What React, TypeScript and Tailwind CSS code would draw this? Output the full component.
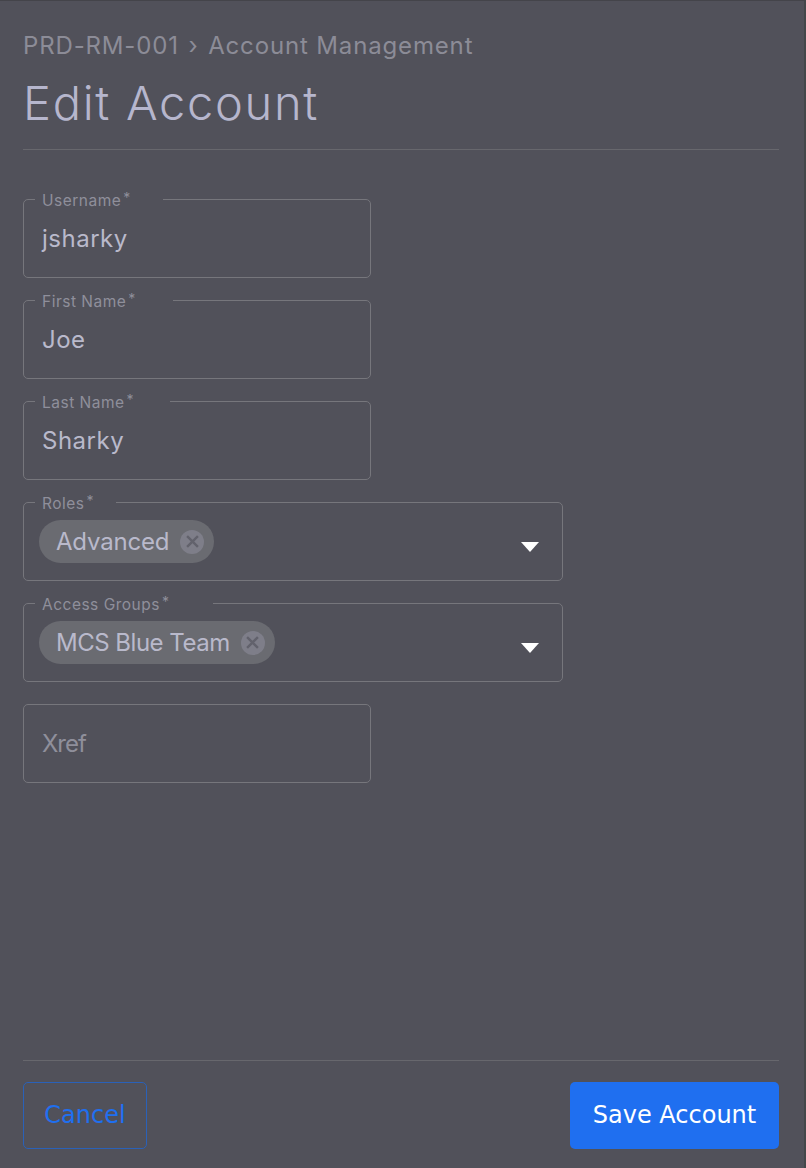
const fontStack = 'font-["Inter","Noto_Sans",sans-serif]'

interface FieldProps {
  label: string
  value: string
  notch: string
}

function Legend({ label, className }: { label: string; className: string }) {
  return (
    <legend className={`${className} pl-[7px] h-[16px] text-[15.5px] leading-[19px] tracking-[0.5px] font-normal text-[#8f8f9b] whitespace-nowrap`}>
      {label}
      <span className="relative -top-[3px] ml-[2px] text-[14px]">*</span>
    </legend>
  )
}

function TextField({ label, value, notch }: FieldProps) {
  return (
    <fieldset className="w-[348px] h-[87px] border border-[#76767c] rounded-[5px] px-[18px]">
      <Legend label={label} className={`-ml-[7px] ${notch}`} />
      <div className="pt-[16px] text-[24px] leading-[32px] tracking-[0.5px] font-normal text-[#b9b9cb]">{value}</div>
    </fieldset>
  )
}

function Chip({ text, tracking }: { text: string; tracking: string }) {
  return (
    <div className="inline-flex items-center h-[43px] rounded-full bg-[#6a6b71] pl-[17px] pr-[10px] gap-[11px]">
      <span className={`text-[24px] leading-[32px] font-normal text-[#b9b9cb] ${tracking}`}>{text}</span>
      <span className="w-[24px] h-[24px] rounded-full bg-[#7e7e89] flex items-center justify-center">
        <svg width="13" height="13" viewBox="0 0 12 12" fill="none" stroke="#62626c" strokeWidth="2.2">
          <path d="M1 1l10 10M11 1L1 11" />
        </svg>
      </span>
    </div>
  )
}

function SelectField({ label, value, notch, tracking }: FieldProps & { tracking: string }) {
  return (
    <fieldset className="w-[540px] h-[87px] border border-[#76767c] rounded-[5px] pl-[15px] pr-[23px]">
      <Legend label={label} className={`-ml-[4px] ${notch}`} />
      <div className="flex items-center justify-between pt-[10px]">
        <Chip text={value} tracking={tracking} />
        <svg className="mt-[10px]" width="18" height="10" viewBox="0 0 18 10" fill="#ffffff">
          <path d="M0 0h18L9 10z" />
        </svg>
      </div>
    </fieldset>
  )
}

export default function App() {
  return (
    <div className={`${fontStack} w-[806px] h-[1168px] bg-[#51515a] border-t border-[#44444a] flex flex-col pl-[23px] pr-[25px] border-r-2 border-r-[#43474a]`}>
      <div className="pt-[28px] h-[149px] border-b border-[#67676d]">
        <div className="text-[24px] leading-[34px] font-normal text-[#8c8c97] tracking-[0.85px]">
          PRD-RM-001 <span className="mx-[2px]">›</span> Account Management
        </div>
        <h1 className="mt-[12px] text-[47px] leading-[56px] font-light tracking-[1.7px] text-[#b6b6cd]">Edit Account</h1>
      </div>

      <div className="mt-[41px] flex-1 flex flex-col gap-[14px]">
        <TextField label="Username" value="jsharky" notch="pr-[32px]" />
        <TextField label="First Name" value="Joe" notch="pr-[37px]" />
        <TextField label="Last Name" value="Sharky" notch="pr-[36px]" />
        <SelectField label="Roles" value="Advanced" notch="pr-[22px]" tracking="tracking-[-0.2px]" />
        <SelectField label="Access Groups" value="MCS Blue Team" notch="pr-[44px]" tracking="tracking-[-0.5px]" />
        <div className="w-[348px] h-[79px] mt-[8px] border border-[#76767c] rounded-[5px] px-[18px] flex items-center text-[24px] font-normal tracking-[-1px] text-[#8f8f9b]">
          Xref
        </div>
      </div>

      <div className="h-[108px] border-t border-[#67676d] pt-[21px] flex justify-between items-start font-['DejaVu_Sans',sans-serif] text-[24px]">
        <button className="w-[124px] h-[67px] pb-[2px] rounded-[5px] border border-[#2a61b8] text-[#1f6ff0]">Cancel</button>
        <button className="w-[209px] h-[67px] pb-[2px] rounded-[5px] bg-[#1f6ff0] text-white">Save Account</button>
      </div>
    </div>
  )
}
